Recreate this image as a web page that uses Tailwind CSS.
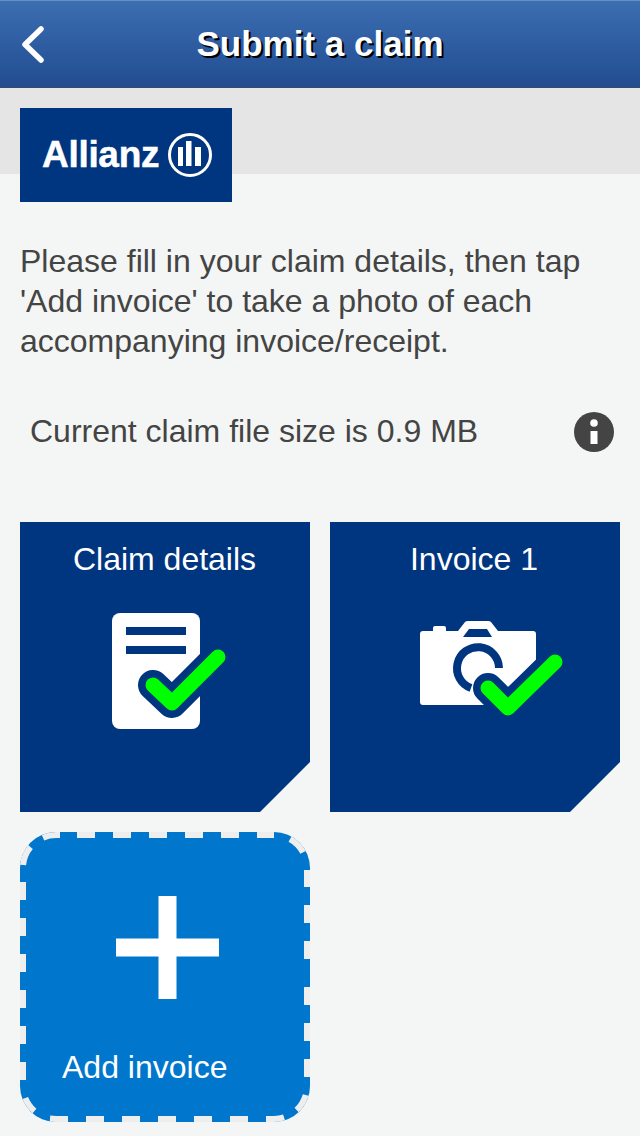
<!DOCTYPE html>
<html><head><meta charset="utf-8"><script src="https://cdn.jsdelivr.net/npm/@tailwindcss/browser@4"></script></head>
<body class="bg-[#f4f6f5] font-['Liberation_Sans',Arial,sans-serif]">
<div class="w-[640px] h-[1136px] overflow-hidden bg-[#f4f6f5]">
  <header class="relative h-[88px] flex items-center justify-center bg-gradient-to-b from-[#3c6eb2] to-[#224c90] border-t border-t-[#6a8fc4] border-b border-b-[#3b4a60]">
    <svg class="absolute left-[21px] top-[25px]" width="24" height="38" viewBox="0 0 24 38"><path d="M20 3 L4 18.500 L20 34" fill="none" stroke="#fff" stroke-width="5.500" stroke-linecap="round" stroke-linejoin="round"/></svg>
    <h1 class="text-[35px] font-bold text-white leading-none -mt-[2px] [text-shadow:2px_2px_0_#000]">Submit a claim</h1>
  </header>
  <div class="h-[86px] bg-[#e5e5e5] pt-5 pl-5">
    <div class="w-[212px] h-[94px] bg-[#00357f] flex items-center pl-[22px] gap-[8px]">
      <span class="text-[37px] font-bold text-white leading-none -mt-[2px] tracking-[-0.3px] [-webkit-text-stroke:0.5px_#fff]">Allianz</span>
      <svg class="blur-[0.3px]" width="46" height="46" viewBox="167 131 46 46"><circle cx="190" cy="154" r="20.500" fill="none" stroke="#fff" stroke-width="3"/><path d="M178 146h5v19h-5z M186 140h5.500v25H186z M195 146h6v19h-6z" fill="#fff"/></svg>
    </div>
  </div>
  <p class="mt-[67px] pl-5 text-[32px] leading-[40px] text-[#444]">Please fill in your claim details, then tap<br>'Add invoice' to take a photo of each<br>accompanying invoice/receipt.</p>
  <div class="mt-[50px] pl-[30px] pr-[26px] h-[40px] flex items-center justify-between">
    <span class="text-[32px] text-[#444] leading-none">Current claim file size is 0.9 MB</span>
    <svg class="mt-[2px]" width="40" height="40" viewBox="0 0 40 40"><circle cx="20" cy="20" r="20" fill="#444"/><circle cx="20" cy="11" r="3.800" fill="#fff"/><rect x="16.500" y="19" width="7" height="13" fill="#fff"/></svg>
  </div>
  <div class="mt-[71px] pl-5 grid grid-cols-[290px_290px] gap-x-5 gap-y-5">
    <div class="h-[290px] bg-[#00357f] [clip-path:polygon(0_0,100%_0,100%_240px,240px_100%,0_100%)] flex flex-col items-center pt-[19px]">
      <span class="text-[32px] text-white leading-[36px] -ml-[1px]">Claim details</span>
      <svg class="mt-[23px] blur-[0.5px]" width="130" height="130" viewBox="100 600 130 130">
        <rect x="112" y="613" width="88" height="116" rx="8" fill="#fff"/>
        <rect x="126" y="627" width="60" height="8" fill="#00357f"/><rect x="126" y="646" width="60" height="8" fill="#00357f"/>
        <path d="M153 685 L172 703 L218 657" fill="none" stroke="#00357f" stroke-width="30" stroke-linecap="round" stroke-linejoin="round"/>
        <path d="M153 685 L172 703 L218 657" fill="none" stroke="#00ff00" stroke-width="15" stroke-linecap="round" stroke-linejoin="round"/>
      </svg>
    </div>
    <div class="h-[290px] bg-[#00357f] [clip-path:polygon(0_0,100%_0,100%_240px,240px_100%,0_100%)] flex flex-col items-center pt-[19px]">
      <span class="text-[32px] text-white leading-[36px] -ml-[2px]">Invoice 1</span>
      <svg class="mt-[23px] blur-[0.5px]" width="180" height="130" viewBox="385 600 180 130">
        <path d="M423 631H433V628Q433 626 435 626H444Q446 626 446 628V631H458L465 622Q466 621 468 621H488Q490 621 491 622L498 631H533Q536 631 536 634V680L510 705H423Q420 705 420 702V634Q420 631 423 631Z" fill="#fff"/>
        <path d="M463 637L469 629H487L492 637Z" fill="#00357f"/>
        <path d="M499 668A21 21 0 1 0 471 688" fill="none" stroke="#00357f" stroke-width="8"/>
        <path d="M488 688L508 708L555 662" fill="none" stroke="#00357f" stroke-width="30" stroke-linecap="round" stroke-linejoin="round"/>
        <path d="M488 688L508 708L555 662" fill="none" stroke="#00ff00" stroke-width="15" stroke-linecap="round" stroke-linejoin="round"/>
      </svg>
    </div>
    <div class="relative h-[290px] rounded-[36px] bg-[#0077cc]">
      <svg class="absolute inset-0" width="290" height="290" viewBox="0 0 290 290">
        <path fill="none" stroke="#eeeeee" stroke-width="6" d="M23 5.700A33 33 0 0 1 36 3H40 M57 3H75 M93 3H111 M129 3H147 M165 3H183 M201 3H219 M237 3H254 M10.500 15A33 33 0 0 0 3.100 33 M3 50V68 M3 86V104 M3 122V140 M3 158V176 M3 194V212 M3 230V248 M5.300 266A33 33 0 0 0 14.500 279 M30 286.500L36 287H48 M66 287H84 M102 287H120 M138 287H156 M174 287H192 M210 287H228 M246 287H254A33 33 0 0 0 264 285.400 M285.700 263A33 33 0 0 1 276.600 278 M287 38V55 M287 73V91 M287 109V127 M287 155V173 M287 191V209 M287 227V245 M270 7.100A33 33 0 0 1 283 20.300"/>
      </svg>
      <svg class="absolute left-[96px] top-[64px] blur-[0.5px]" width="103" height="103" viewBox="0 0 103 103"><path d="M42.500 0h18v42.500h42.500v18H60.500v42.500h-18V60.500H0v-18h42.500z" fill="#fff"/></svg>
      <span class="absolute left-[42px] top-[217px] text-[32px] text-white leading-[36px]">Add invoice</span>
    </div>
  </div>
</div>
</body></html>
